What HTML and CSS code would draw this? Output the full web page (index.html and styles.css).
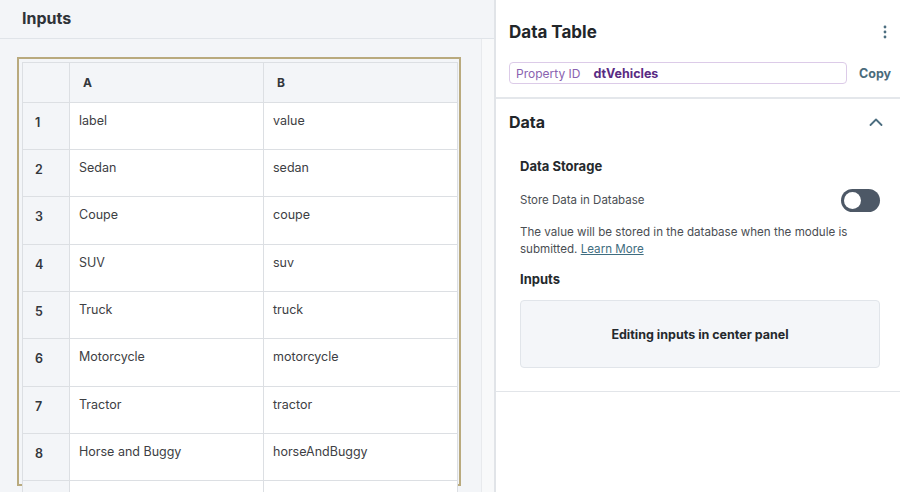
FILE: index.html
```html
<!DOCTYPE html>
<html lang="en">
<head>
<meta charset="utf-8">
<title>Data Table</title>
<link rel="stylesheet" href="styles.css">
</head>
<body>
<div class="app">
  <section class="canvas-panel">
    <header class="canvas-head">Inputs</header>
    <div class="canvas-body">
      <div class="canvas-area">
        <div class="frame">
          <table class="grid">
            <colgroup><col class="c-num"><col class="c-a"><col class="c-b"></colgroup>
            <thead>
              <tr><th class="num"></th><th>A</th><th>B</th></tr>
            </thead>
            <tbody>
              <tr><td class="num">1</td><td>label</td><td>value</td></tr>
              <tr><td class="num">2</td><td>Sedan</td><td>sedan</td></tr>
              <tr class="tall"><td class="num">3</td><td>Coupe</td><td>coupe</td></tr>
              <tr><td class="num">4</td><td>SUV</td><td>suv</td></tr>
              <tr><td class="num">5</td><td>Truck</td><td>truck</td></tr>
              <tr class="tall"><td class="num">6</td><td>Motorcycle</td><td>motorcycle</td></tr>
              <tr><td class="num">7</td><td>Tractor</td><td>tractor</td></tr>
              <tr><td class="num">8</td><td>Horse and Buggy</td><td>horseAndBuggy</td></tr>
              <tr><td class="num"></td><td></td><td></td></tr>
            </tbody>
          </table>
        </div>
      </div>
      <div class="scroll-strip"></div>
    </div>
  </section>

  <aside class="props">
    <div class="props-head">
      <div class="title-row">
        <h1 class="title">Data Table</h1>
        <svg class="kebab" width="4" height="14" viewBox="0 0 4 14"><circle cx="2" cy="2" r="1.4"/><circle cx="2" cy="7" r="1.4"/><circle cx="2" cy="12" r="1.4"/></svg>
      </div>
      <div class="id-row">
        <div class="id-field"><span class="id-label">Property ID</span><span class="id-value">dtVehicles</span></div>
        <span class="copy">Copy</span>
      </div>
    </div>

    <div class="section">
      <div class="section-head">
        <h2 class="section-title">Data</h2>
        <svg class="chev" width="14" height="8" viewBox="0 0 14 8"><path d="M1.5 7 L7 1.5 L12.5 7" fill="none" stroke="currentColor" stroke-width="1.8" stroke-linecap="round" stroke-linejoin="round"/></svg>
      </div>
      <div class="section-body">
        <h3 class="sub">Data Storage</h3>
        <div class="toggle-row">
          <span class="toggle-label">Store Data in Database</span>
          <span class="toggle"><span class="knob"></span></span>
        </div>
        <p class="help">The value will be stored in the database when the module is submitted. <a class="link" href="#">Learn More</a></p>
        <h3 class="sub sub-inputs">Inputs</h3>
        <div class="note">Editing inputs in center panel</div>
      </div>
    </div>
  </aside>
</div>
</body>
</html>
```

FILE: styles.css
```css
* { box-sizing: border-box; }
html, body {
  margin: 0;
  padding: 0;
  width: 900px;
  height: 492px;
  overflow: hidden;
  background: #ffffff;
  font-family: Inter, "Noto Sans", "Liberation Sans", sans-serif;
  color: #2a2e33;
}
.app {
  display: flex;
  height: 492px;
  overflow: hidden;
}

/* left canvas */
.canvas-panel {
  width: 496px;
  flex: none;
  display: flex;
  flex-direction: column;
  background: #f3f5f8;
  border-right: 2px solid #e1e4e8;
  overflow: hidden;
}
.canvas-head {
  height: 39px;
  flex: none;
  padding: 8px 0 0 22px;
  font-size: 16px;
  font-weight: 700;
  line-height: 20px;
  color: #2f3338;
  border-bottom: 1px solid #e0e4e9;
  background: #f3f5f8;
}
.canvas-body {
  flex: 1;
  display: flex;
  min-height: 0;
}
.canvas-area {
  width: 481px;
  flex: none;
  padding: 18px 0 0 17px;
}
.scroll-strip {
  flex: 1;
  background: #f8f9fa;
  border-left: 1px solid #e8eaed;
}
.frame {
  width: 444px;
  height: 429px;
  border: 2px solid #b9aa7e;
  padding: 3px 0 0 3px;
}
.grid {
  width: 435px;
  table-layout: fixed;
  border-collapse: collapse;
  background: #ffffff;
  font-size: 12.5px;
  color: #3d4044;
}
.c-num { width: 47px; }
.c-a { width: 194px; }
.c-b { width: 194px; }
.grid th, .grid td {
  border: 1px solid #dcdfe3;
  text-align: left;
  vertical-align: top;
  padding: 0;
}
.grid th {
  height: 40px;
  padding: 12px 0 0 13px;
  font-size: 12px;
  font-weight: 700;
  background: #f3f5f8;
  color: #33373c;
}
.grid td {
  height: 47px;
  padding: 10px 0 0 9px;
  line-height: 16px;
}
.grid tr.tall td { height: 48px; }
.grid td.num {
  background: #f3f5f8;
  font-weight: 600;
  font-size: 12.5px;
  padding: 12px 0 0 12px;
  color: #33373c;
}

/* right properties panel */
.props {
  flex: 1;
  background: #ffffff;
  display: flex;
  flex-direction: column;
}
.props-head {
  padding: 21px 9px 13px 13px;
  border-bottom: 2px solid #e4e7eb;
}
.title-row {
  display: flex;
  align-items: center;
  justify-content: space-between;
  height: 22px;
  padding-right: 4px;
}
.title {
  margin: 0;
  font-size: 17px;
  font-weight: 700;
  line-height: 22px;
  color: #22262a;
}
.kebab { fill: #4c6e80; }
.id-row {
  display: flex;
  align-items: center;
  gap: 12px;
  margin-top: 19px;
}
.id-field {
  width: 338px;
  height: 22px;
  border: 1px solid #dccbe8;
  border-radius: 4px;
  display: flex;
  align-items: center;
  padding-left: 6px;
  font-size: 12.5px;
}
.id-label { color: #8a62b0; margin-right: 13px; font-size: 12px; }
.id-value { color: #5a2b83; font-weight: 700; }
.copy {
  font-size: 12.5px;
  font-weight: 700;
  color: #4a6b7c;
}

.section {
  border-bottom: 1px solid #e2e5e9;
  padding-bottom: 23px;
}
.section-head {
  display: flex;
  align-items: center;
  justify-content: space-between;
  padding: 13px 17px 0 13px;
  height: 33px;
}
.section-title {
  margin: 0;
  font-size: 16px;
  font-weight: 700;
  line-height: 20px;
  color: #22262a;
}
.chev { color: #4c6e80; }
.section-body {
  padding: 0 20px 0 24px;
}
.sub {
  margin: 25px 0 0 0;
  font-size: 13px;
  font-weight: 700;
  line-height: 18px;
  color: #25292d;
}
.toggle-row {
  display: flex;
  align-items: center;
  justify-content: space-between;
  margin-top: 13px;
  height: 24px;
}
.toggle-label {
  font-size: 11.5px;
  color: #4a4e53;
}
.toggle {
  width: 39px;
  height: 23px;
  border-radius: 12px;
  background: #4d5866;
  display: flex;
  align-items: center;
  padding-left: 3px;
}
.knob {
  width: 17px;
  height: 17px;
  border-radius: 50%;
  background: #ffffff;
}
.help {
  margin: 12px 0 0 0;
  font-size: 11.6px;
  line-height: 17px;
  color: #4a4e53;
}
.link {
  color: #3f6d80;
  text-decoration: underline;
}
.sub-inputs { margin-top: 12px; }
.note {
  margin-top: 12px;
  height: 68px;
  background: #f4f6f9;
  border: 1px solid #e1e5ea;
  border-radius: 4px;
  display: flex;
  align-items: center;
  justify-content: center;
  font-size: 12.5px;
  font-weight: 700;
  color: #25292d;
}
```
